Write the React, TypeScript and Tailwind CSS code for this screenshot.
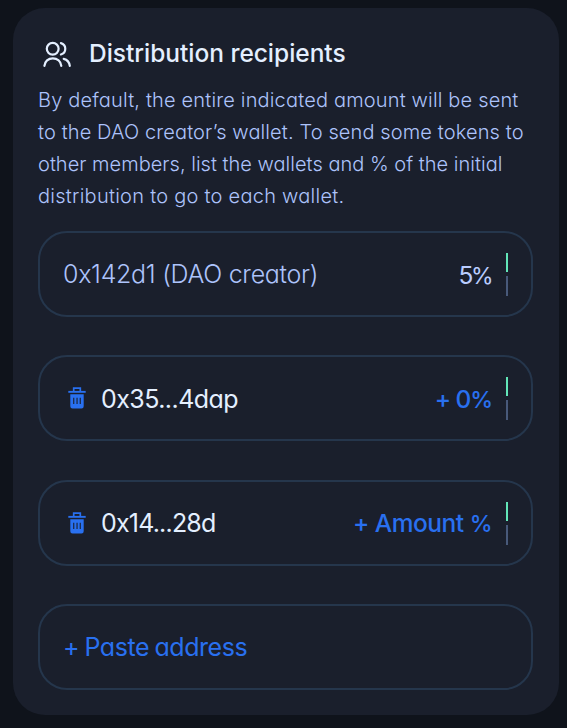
import type { ReactNode } from "react";

function PeopleIcon() {
  return (
    <svg
      width="30"
      height="28"
      viewBox="42 40 30 28"
      fill="none"
      stroke="currentColor"
      strokeWidth="2.2"
      strokeLinecap="round"
      className="shrink-0"
    >
      <circle cx="52.7" cy="48.8" r="5.9" />
      <path d="M60.9 43.1a5.9 5.9 0 0 1 0 11.4" />
      <path d="M44.4 65.9c.4-4.5 3.9-7.6 8.4-7.6s8 3.1 8.5 7.6" />
      <path d="M63.7 58.9c3.4.9 5.7 3.4 6.1 7" />
    </svg>
  );
}

function TrashIcon() {
  return (
    <svg width="18" height="22" viewBox="0 0 18 22" className="shrink-0 text-[#2970f0]">
      <path d="M5.7 4.2V1.1h6.6v3.1" fill="none" stroke="currentColor" strokeWidth="1.7" />
      <path d="M.3 3.9h17.4v1.9H.3z" fill="currentColor" />
      <path
        fillRule="evenodd"
        fill="currentColor"
        d="M2.3 7.3h13.4v12a2.2 2.2 0 0 1-2.2 2.2h-9a2.2 2.2 0 0 1-2.2-2.2zM5.2 10.8v6.2h1.1v-6.2zM8.5 10.8v6.2h1.1v-6.2zM11.7 10.8v6.2h1.1v-6.2z"
      />
    </svg>
  );
}

function Stepper() {
  return (
    <div className="mt-[1px] ml-[14px] flex w-[2px] flex-col gap-[4px]">
      <div className="h-[19px] bg-[#62e5b8]" />
      <div className="h-[20px] bg-[#48597a]" />
    </div>
  );
}

function Row({ children }: { children: ReactNode }) {
  return (
    <div className="flex h-[86px] w-[495px] items-center rounded-[29px] border-2 border-[#25364c] pr-[23px] pl-[23px] text-[25px] leading-none whitespace-nowrap">
      {children}
    </div>
  );
}

export default function App() {
  return (
    <div className="h-[728px] w-[567px] bg-[#0f131b] pt-[8px] pl-[13px] font-['Inter',sans-serif] [font-feature-settings:'cv11']">
      <div className="h-[707px] w-[546px] rounded-[32px] bg-[#1a1f2c] pl-[25px] pt-[30px]">
        <div className="flex h-[32px] items-center pl-[4px] text-[#e4efff]">
          <PeopleIcon />
          <h1 className="mb-[2px] ml-[17px] text-[24.5px] leading-[32px] font-medium tracking-[-0.03px] whitespace-nowrap">
            Distribution recipients
          </h1>
        </div>
        <div className="mt-[14px] text-[20px] leading-[32px] font-[330] whitespace-nowrap text-[#adc3fb]">
          <p className="tracking-[0.17px]">By default, the entire indicated amount will be sent</p>
          <p className="tracking-[0.12px]">to the DAO creator’s wallet. To send some tokens to</p>
          <p className="tracking-[0.02px]">other members, list the wallets and % of the initial</p>
          <p className="tracking-[0.26px]">distribution to go to each wallet.</p>
        </div>
        <div className="mt-[19px] flex flex-col gap-[38.3px]">
          <Row>
            <span className="mt-[1px] font-[330] tracking-[-0.3px] text-[#adc3fb]">0x142d1 (DAO creator)</span>
            <span className="mt-[2px] ml-auto text-[24.5px] tracking-[-2.4px] text-[#b9ccff]">
              5<span className="text-[23px] tracking-[-1.5px]">%</span>
            </span>
            <Stepper />
          </Row>
          <Row>
            <div className="pl-[5px]"><TrashIcon /></div>
            <span className="mt-[2px] ml-[15px] tracking-[-0.55px] text-[#e4efff]">0x35...4dap</span>
            <span className="mt-[2px] ml-auto text-[24.5px] font-medium tracking-[-1.1px] text-[#2970f0]">
              + 0<span className="text-[23px]">%</span>
            </span>
            <Stepper />
          </Row>
          <Row>
            <div className="pl-[5px]"><TrashIcon /></div>
            <span className="mt-[2px] ml-[15px] tracking-[-0.8px] text-[#e4efff]">0x14...28d</span>
            <span className="mt-[2px] ml-auto text-[24.5px] font-medium tracking-[-0.5px] text-[#2970f0]">
              + Amount <span className="text-[23px]">%</span>
            </span>
            <Stepper />
          </Row>
          <Row>
            <span className="mt-[2px] tracking-[-0.45px] text-[#2970f0] [word-spacing:-1.2px]">+ Paste address</span>
          </Row>
        </div>
      </div>
    </div>
  );
}
